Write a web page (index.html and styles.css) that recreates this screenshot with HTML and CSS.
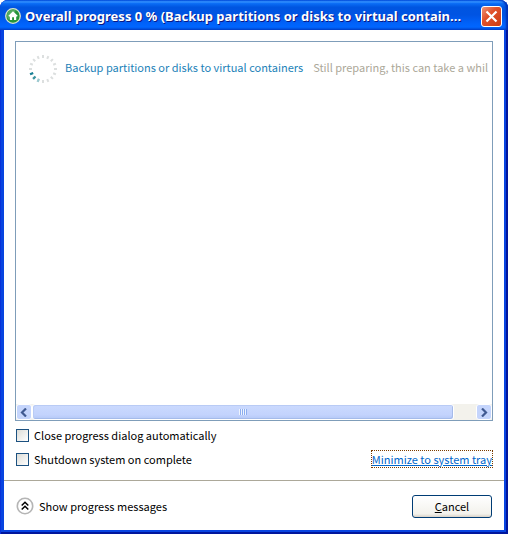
FILE: index.html
```
<!DOCTYPE html>
<html lang="en">
<head>
  <meta charset="UTF-8">
  <title>Overall progress</title>
  <link rel="stylesheet" href="styles.css">
</head>
<body>
  <div class="window">
    <header class="titlebar">
      <svg class="app-icon" width="16" height="16" viewBox="0 0 16 16">
        <circle cx="8" cy="8" r="7.3" fill="#26953a" stroke="#d9e3cf" stroke-width="1.3"/>
        <path d="M2 6a6.2 6.2 0 0 1 9-3.5L4 12a6 6 0 0 1-2-6z" fill="#71b978" opacity=".6"/>
        <path d="M8 3.2 3.4 7.8l.9.9.6-.5v3.9h2.2V9.3h1.9v2.8h2.2V8.2l.6.5.9-.9z" fill="#fff"/>
      </svg>
      <h1 class="title">Overall progress 0 % (Backup partitions or disks to virtual contain...</h1>
      <button class="close" type="button" aria-label="Close">
        <svg width="13" height="13" viewBox="0 0 13 13">
          <path d="M1.5 1.5l10 10M11.5 1.5l-10 10" stroke="#fff" stroke-width="2.2"/>
        </svg>
      </button>
    </header>

    <main class="content">
      <section class="list">
        <div class="task">
          <svg class="spinner" width="30" height="30" viewBox="-15 -15 30 30">
            <g stroke="#dcdfdf" stroke-width="2">
              <path d="M0-14v3M0 11v3M-14 0h3M11 0h3"/>
              <path d="M0-14v3M0 11v3M-14 0h3M11 0h3" transform="rotate(22.5)"/>
              <path d="M0-14v3M0 11v3M-14 0h3M11 0h3" transform="rotate(45)"/>
              <path d="M0-14v3M0 11v3M-14 0h3M11 0h3" transform="rotate(67.5)"/>
            </g>
            <g stroke-width="2.2">
              <path d="M-14 0h3.4" transform="rotate(-22.5)" stroke="#168096"/>
              <path d="M-14 0h3.4" transform="rotate(-45)" stroke="#39939f"/>
              <path d="M-14 0h3.4" transform="rotate(-67.5)" stroke="#9bc9d0"/>
            </g>
          </svg>
          <span class="task-name">Backup partitions or disks to virtual containers</span>
          <span class="task-status">Still preparing, this can take a whil</span>
        </div>
        <div class="scrollbar">
          <button class="arrow" type="button" aria-label="Scroll left">
            <svg width="8" height="9" viewBox="0 0 8 9"><path d="M6 .5l-4 4 4 4" fill="none" stroke="#405a91" stroke-width="2.2"/></svg>
          </button>
          <div class="track">
            <div class="thumb"><i class="grip"></i></div>
          </div>
          <button class="arrow" type="button" aria-label="Scroll right">
            <svg width="8" height="9" viewBox="0 0 8 9"><path d="M2 .5l4 4-4 4" fill="none" stroke="#405a91" stroke-width="2.2"/></svg>
          </button>
        </div>
      </section>

      <div class="options">
        <label class="option"><input class="check" type="checkbox">Close progress dialog automatically</label>
        <div class="option-row">
          <label class="option"><input class="check" type="checkbox">Shutdown system on complete</label>
          <a class="minimize" href="#">Minimize to system tray</a>
        </div>
      </div>
    </main>

    <footer class="footer">
      <button class="messages" type="button">
        <svg width="18" height="18" viewBox="0 0 18 18" fill="none">
          <circle cx="9" cy="9" r="7.7" stroke="#b5b5b5" stroke-width="1.6"/>
          <path d="M5.7 8.5 9 5.2l3.3 3.3M5.7 12.5 9 9.2l3.3 3.3" stroke="#000" stroke-width="1.5"/>
        </svg>
        Show progress messages
      </button>
      <button class="cancel" type="button"><u>C</u>ancel</button>
    </footer>
  </div>
</body>
</html>
```
FILE: styles.css
```
* {
  box-sizing: border-box;
}
body {
  margin: 0;
  background: #fff;
  font-family: "Noto Sans CJK JP", sans-serif;
  font-size: 11px;
  line-height: 16px;
  color: #000;
}
button {
  padding: 0;
  border: none;
  background: none;
  font: inherit;
  color: inherit;
}
.window {
  display: flex;
  flex-direction: column;
  min-height: 100vh;
  padding: 0 4px 4px;
  border-radius: 8px 8px 0 0;
  background: #0844e0;
  box-shadow: inset 1px 0 #0831d9, inset -2px -2px #00159c;
}
.titlebar {
  display: flex;
  align-items: center;
  gap: 4px;
  height: 30px;
  margin: 0 -4px;
  padding: 2px 6px 0 5px;
  border-radius: 8px 8px 0 0;
  background: linear-gradient(#0058ee 0, #3593ff 6%, #0a6cf5 12%, #0055e0 24%, #0054e3 50%, #0062fa 78%, #0066ff 90%, #0048d0 100%);
  box-shadow: inset -2px 0 2px #0030b4;
}
.app-icon {
  flex: none;
}
.title {
  flex: 1;
  min-width: 0;
  margin: 0;
  overflow: hidden;
  white-space: nowrap;
  text-overflow: ellipsis;
  font-family: "Noto Sans", sans-serif;
  font-size: 13px;
  line-height: 18px;
  font-weight: bold;
  color: #fff;
  text-shadow: 1px 1px #0a1883;
}
.close {
  display: grid;
  place-items: center;
  flex: none;
  width: 21px;
  height: 21px;
  border: 1px solid #fff;
  border-radius: 3px;
  background: linear-gradient(135deg, #ee9478, #e0512b 40%, #cc3c12);
}
.content {
  display: flex;
  flex: 1;
  flex-direction: column;
  padding: 11px 11px 12px;
  background: #fff;
}
.list {
  display: flex;
  flex: 1;
  flex-direction: column;
  justify-content: space-between;
  border: 1px solid #7f9db9;
}
.task {
  display: flex;
  gap: 7px;
  padding: 12px 0 0 12px;
  overflow: hidden;
  white-space: nowrap;
}
.spinner {
  flex: none;
}
.task-name {
  padding: 5px 3px 0 0;
  color: #1c82b8;
}
.task-status {
  padding-top: 5px;
  color: #aca899;
}
.scrollbar {
  display: flex;
  height: 16px;
  background: #f3f2ec;
}
.arrow {
  display: grid;
  place-items: center;
  flex: none;
  width: 16px;
  border: 1px solid #fff;
  border-radius: 3px;
  background: #c5d5fc;
}
.track {
  flex: 1;
}
.thumb {
  display: grid;
  place-items: center;
  width: 95%;
  height: 16px;
  border: 1px solid #fff;
  border-radius: 3px;
  background: linear-gradient(#cbdafe, #c3d3fd 70%, #b4c8f6);
  box-shadow: inset -1px -1px #a5bbea, inset 1px 1px #b9cbf5;
}
.grip {
  width: 8px;
  height: 6px;
  background: repeating-linear-gradient(90deg, #eef4fe 0 1px, #8caef0 1px 2px);
}
.options {
  display: flex;
  flex-direction: column;
  gap: 6px;
  padding-top: 5px;
}
.option {
  display: flex;
  align-items: center;
  gap: 5px;
  height: 18px;
}
.option-row {
  display: flex;
  align-items: center;
  justify-content: space-between;
  height: 18px;
}
.check {
  appearance: none;
  width: 13px;
  height: 13px;
  margin: 0 0 0 1px;
  border: 1px solid #1c5180;
  background: linear-gradient(135deg, #dcdcd7, #fff);
}
.minimize {
  border: 1px dotted #7a3c00;
  color: #0066cc;
}
.footer {
  display: flex;
  align-items: center;
  justify-content: space-between;
  height: 50px;
  padding: 1px 12px 0;
  border-top: 1px solid #aca899;
  background: #fff;
}
.messages {
  display: flex;
  align-items: center;
  gap: 5px;
}
.cancel {
  width: 80px;
  height: 23px;
  border: 1px solid #003c74;
  border-radius: 3px;
  background: linear-gradient(#fff, #f3f2ec 85%, #d8d1c6);
}
```
